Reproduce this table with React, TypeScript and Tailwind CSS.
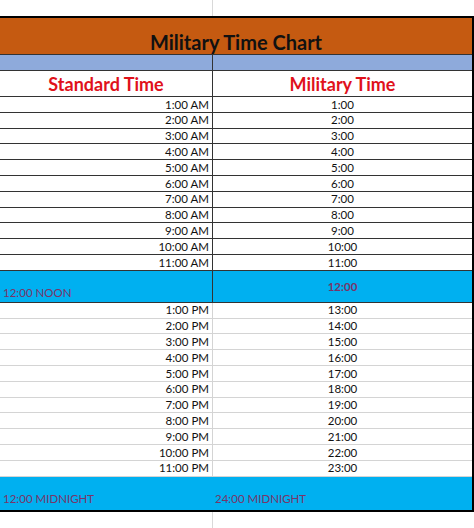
import React from 'react';

const amRows = [
    ['1:00 AM', '1:00'],
    ['2:00 AM', '2:00'],
    ['3:00 AM', '3:00'],
    ['4:00 AM', '4:00'],
    ['5:00 AM', '5:00'],
    ['6:00 AM', '6:00'],
    ['7:00 AM', '7:00'],
    ['8:00 AM', '8:00'],
    ['9:00 AM', '9:00'],
    ['10:00 AM', '10:00'],
    ['11:00 AM', '11:00'],
];

const pmRows = [
    ['1:00 PM', '13:00'],
    ['2:00 PM', '14:00'],
    ['3:00 PM', '15:00'],
    ['4:00 PM', '16:00'],
    ['5:00 PM', '17:00'],
    ['6:00 PM', '18:00'],
    ['7:00 PM', '19:00'],
    ['8:00 PM', '20:00'],
    ['9:00 PM', '21:00'],
    ['10:00 PM', '22:00'],
    ['11:00 PM', '23:00'],
];

export default function App() {
    return (
        <div className="w-[474px] h-[528px] bg-white overflow-hidden text-[#111]" style={{ fontFamily: 'Lato, "Open Sans", sans-serif' }}>
            {/* empty sheet cells above the chart */}
            <div className="flex h-[16px]">
                <div className="w-[213px] border-r border-[#d9d9d9]" />
                <div className="flex-1" />
            </div>

            <div className="border-t-2 border-r-2 border-b-2 border-black">
                {/* title */}
                <div className="h-[37px] bg-[#c55a11] border-b border-[#333] flex items-end justify-center">
                    <span className="text-[20px] font-bold leading-none mb-[2px]">Military Time Chart</span>
                </div>

                {/* blue band */}
                <div className="flex h-[16px] bg-[#8eaadb] border-b border-[#333]">
                    <div className="w-[213px] border-r border-[#333]" />
                    <div className="flex-1" />
                </div>

                {/* header */}
                <div className="flex h-[26px] border-b border-[#333] text-[#e0111b] font-bold text-[18px]">
                    <div className="w-[213px] border-r border-[#333] flex items-end justify-center pb-[3px] leading-none">Standard Time</div>
                    <div className="flex-1 flex items-end justify-center pb-[3px] leading-none">Military Time</div>
                </div>

                {amRows.map((row, index) => (
                    <div key={index} className="flex h-[15.8px] border-b border-[#333] text-[11.5px] leading-none">
                        <div className="w-[213px] border-r border-[#333] flex items-center justify-end pr-[3px]">{row[0]}</div>
                        <div className="flex-1 flex items-center justify-center">{row[1]}</div>
                    </div>
                ))}

                {/* noon */}
                <div className="flex h-[32px] bg-[#00b0f0] border-b border-[#333] text-[#7a3468] text-[11.5px] leading-none">
                    <div className="w-[213px] border-r border-[#333] flex items-end pl-[3px] pb-[3px]">12:00 NOON</div>
                    <div className="flex-1 flex items-center justify-center font-bold">12:00</div>
                </div>

                {pmRows.map((row, index) => (
                    <div key={index} className="flex h-[15.8px] border-b border-[#d4d4d4] text-[11.5px] leading-none">
                        <div className="w-[213px] border-r border-[#d4d4d4] flex items-center justify-end pr-[3px]">{row[0]}</div>
                        <div className="flex-1 flex items-center justify-center">{row[1]}</div>
                    </div>
                ))}

                {/* midnight */}
                <div className="flex h-[33px] bg-[#00b0f0] text-[#7a3468] text-[11.5px] leading-none">
                    <div className="w-[213px] flex items-end pl-[3px] pb-[5px]">12:00 MIDNIGHT</div>
                    <div className="flex-1 flex items-end pl-[2px] pb-[5px]">24:00 MIDNIGHT</div>
                </div>
            </div>

            {/* empty sheet cells below */}
            <div className="flex h-[20px]">
                <div className="w-[213px] border-r border-[#d9d9d9]" />
                <div className="flex-1" />
            </div>
        </div>
    );
}
